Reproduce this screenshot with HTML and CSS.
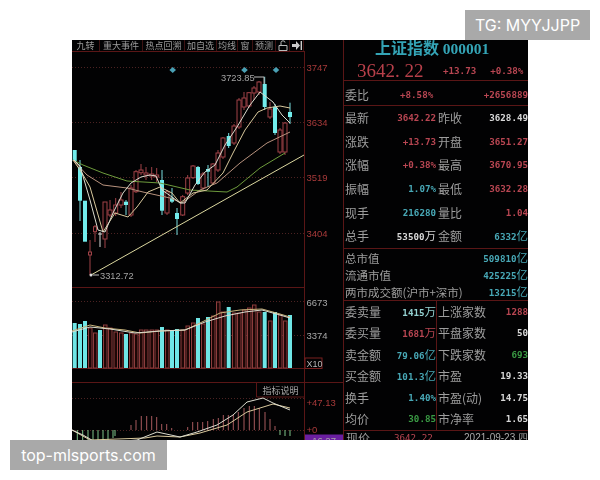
FILE: index.html
```html
<!DOCTYPE html>
<html lang="zh">
<head>
<meta charset="utf-8">
<title>上证指数 000001</title>
<link rel="stylesheet" href="styles.css">
</head>
<body>
<div class="stage">
  <div class="terminal">
    <section class="chart">
      <nav class="toolbar">
        <span>九转</span><span>重大事件</span><span>热点回溯</span><span>加自选</span><span>均线</span><span>窗</span><span>预测</span>
        <span class="tool-icon"><svg width="10" height="11" viewBox="0 0 10 11"><path class="glyph" d="M1 5.500H9V10.500H1ZM3 5.500V2.500Q3 .8 5 .8T7 2.500"/></svg></span>
        <span class="tool-icon"><svg width="10" height="9" viewBox="0 0 10 9"><path class="glyph-solid" d="M0 3H4V0L8 4.500 4 9V6H0ZM8.600 0H10V9H8.600Z"/></svg></span>
      </nav>
      <svg class="plot" width="271" height="388" viewBox="72 52 271 388">
        <path class="rule" d="M304.500 52V440M72 287.500H304.500M72 368.500H304.500M72 382.500H343M256.500 382.500V397M256.500 397H304.500"/>
        <path class="dots" d="M72 67.500H304M72 122.500H304M72 177.500H304M72 233.500H304M72 301.500H304M72 335.500H304M72 398.500H304M72 430.500H304"/>

        <g class="diamonds">
          <path d="M172.700 67 176 70 172.700 73 169.400 70Z"/>
          <path d="M244.500 67 247.800 70 244.500 73 241.200 70Z"/>
          <path d="M276 67 279.300 70 276 73 272.700 70Z"/>
        </g>

        <g class="wick-r">
          <path d="M90 240V275M95 225V242M105 202V248M110 200V217M115.700 198V216M121 192V208M131 185V217M136 170V193M141 164V175M146 167V180M151.700 167V180M156.700 168V182M167 190V215M182.700 195V216M187.700 175V195M193 165V179M203 172V190M213 163V185M218 150V172M223 137V159M234 124V145M239 98V129M244 92V110M249 92V108M254 86V100M259 81V95M270 102V119M280 128V154M285 122V155"/>
        </g>
        <g class="wick-c">
          <path d="M80 160V221M126 200V215M162 170V215M172 188V203M177 208V235M198 166V185M208 165V187M228.700 133V148M264.700 76.700V110M275 104V135M290 102.700V124"/>
        </g>
        <path class="wick-w" d="M100 232V247M98 234H102"/>
        <g class="body-r">
          <rect x="88.500" y="252" width="3" height="3"/><rect x="93.500" y="226.700" width="3" height="5"/>
          <rect x="103" y="202" width="4" height="37"/><rect x="108" y="210" width="4" height="5"/>
          <rect x="113.700" y="205" width="4" height="8"/><rect x="119" y="200" width="4" height="5"/>
          <rect x="129" y="188" width="4" height="27"/><rect x="134" y="171.700" width="4" height="20"/>
          <rect x="139" y="170" width="4" height="2.700"/><rect x="144" y="173" width="4" height="2"/>
          <rect x="149.700" y="174" width="4" height="2"/><rect x="154.700" y="175" width="4" height="2"/>
          <rect x="165" y="191.700" width="4" height="21.300"/><rect x="180.700" y="196.700" width="4" height="18.300"/>
          <rect x="185.700" y="178" width="4" height="15"/><rect x="191" y="166" width="4" height="11.700"/>
          <rect x="201" y="174" width="4" height="14"/><rect x="211" y="164" width="4" height="19"/>
          <rect x="216" y="153" width="4" height="17"/><rect x="221" y="138" width="4" height="19"/>
          <rect x="232" y="126" width="4" height="17"/><rect x="237" y="100" width="4" height="27"/>
          <rect x="242" y="98" width="4" height="9"/><rect x="247" y="92.700" width="4" height="13.300"/>
          <rect x="252" y="88" width="4" height="5"/><rect x="257" y="82" width="4" height="10"/>
          <rect x="268" y="109" width="4" height="8"/><rect x="278" y="130" width="4" height="22"/>
          <rect x="283" y="123" width="4" height="29"/>
        </g>
        <g class="body-c">
          <rect x="72.700" y="150" width="4" height="11"/><rect x="78" y="167" width="4" height="33.700"/>
          <rect x="83" y="200.700" width="4" height="41"/><rect x="124" y="201.700" width="4" height="3.300"/>
          <rect x="160" y="180" width="4" height="30.700"/><rect x="170" y="197.700" width="4" height="4"/>
          <rect x="175" y="213" width="4" height="6"/><rect x="196" y="167" width="4" height="17"/>
          <rect x="206" y="169" width="4" height="2.700"/><rect x="226.700" y="136" width="4" height="10"/>
          <rect x="262.700" y="84" width="4" height="23"/><rect x="273" y="106.700" width="4" height="26.300"/>
          <rect x="288" y="112" width="4" height="5"/>
        </g>

        <polyline class="ma ma-green" points="73,160 83,165 103,173 127,181 160,183 190,190 227,192 237,187 260,168 285,153"/>
        <polyline class="ma ma-pink" points="73,160 87,175 103,185 127,188 143,192 170,198 182,203 200,190 217,183 240,163 267,143 290,132"/>
        <polyline class="ma ma-beige" points="73,160 82,173 90,187 103,232 115,213 128,217 137,207 148,192 160,187 172,193 180,203 193,193 207,190 223,173 233,153 245,130 258,112 267,108 280,106 290,108"/>
        <polyline class="ma ma-white" points="74,160 80,166 90,200 98,230 105,232 113,213 123,193 131,183 141,177 150,175 156,176 162,190 172,197 180,203 185,203 195,185 205,172 215,165 225,145 237,127 250,105 260,92 273,102 282,115 290,123"/>
        <path class="trend" d="M91 275 304 155"/>

        <circle class="pin" cx="91" cy="275" r="1.500"/>
        <path class="leader" d="M93 275H99M254 77H264V84"/>
        <text class="price-note" x="221" y="80.500">3723.85</text>
        <text class="price-note" x="100" y="278.500">3312.72</text>
        <text class="axis axis-red" x="306.500" y="70.500">3747</text>
        <text class="axis axis-red" x="306.500" y="126">3634</text>
        <text class="axis axis-red" x="306.500" y="181">3519</text>
        <text class="axis axis-red" x="306.500" y="236.500">3404</text>
        <text class="axis axis-grey" x="306.500" y="306">6673</text>
        <text class="axis axis-grey" x="306.500" y="339">3374</text>

        <g class="vol-r">
          <rect x="88.500" y="328" width="3.500" height="40"/><rect x="93.500" y="333" width="3.500" height="35"/>
          <rect x="103.500" y="325" width="3.500" height="43"/><rect x="108.500" y="328" width="3.500" height="40"/>
          <rect x="114" y="332" width="3.500" height="36"/><rect x="119.500" y="333" width="3.500" height="35"/>
          <rect x="129.500" y="333" width="3.500" height="35"/><rect x="134.500" y="334" width="3.500" height="34"/>
          <rect x="139.500" y="330" width="3.500" height="38"/><rect x="144.500" y="330" width="3.500" height="38"/>
          <rect x="150" y="330" width="3.500" height="38"/><rect x="155" y="330" width="3.500" height="38"/>
          <rect x="165.500" y="330" width="3.500" height="38"/><rect x="181" y="330" width="3.500" height="38"/>
          <rect x="186" y="326" width="3.500" height="42"/><rect x="191.500" y="323" width="3.500" height="45"/>
          <rect x="201.500" y="324" width="3.500" height="44"/><rect x="211.500" y="316" width="3.500" height="52"/>
          <rect x="216.500" y="302" width="3.500" height="66"/><rect x="221.500" y="312" width="3.500" height="56"/>
          <rect x="232.500" y="313" width="3.500" height="55"/><rect x="237.500" y="313" width="3.500" height="55"/>
          <rect x="242.500" y="310" width="3.500" height="58"/><rect x="247.500" y="308" width="3.500" height="60"/>
          <rect x="252.500" y="305" width="3.500" height="63"/><rect x="257.500" y="312" width="3.500" height="56"/>
          <rect x="268.500" y="321" width="3.500" height="47"/><rect x="278.500" y="315" width="3.500" height="53"/>
          <rect x="283.500" y="321" width="3.500" height="47"/>
        </g>
        <g class="vol-c">
          <rect x="72.700" y="323" width="4" height="45"/><rect x="78" y="324" width="4" height="44"/>
          <rect x="83" y="321" width="4" height="47"/><rect x="98" y="330" width="4" height="38"/>
          <rect x="124" y="334" width="4" height="34"/><rect x="160" y="327" width="4" height="41"/>
          <rect x="170" y="330" width="4" height="38"/><rect x="175" y="329" width="4" height="39"/>
          <rect x="196" y="318" width="4" height="50"/><rect x="206" y="317" width="4" height="51"/>
          <rect x="226.700" y="307" width="4" height="61"/><rect x="262.700" y="312" width="4" height="56"/>
          <rect x="273" y="312" width="4" height="56"/><rect x="288" y="315" width="4" height="53"/>
        </g>
        <polyline class="ma ma-beige-vol" points="72,331 90,325 105,328 125,330 140,333 160,331 185,330 200,323 220,313 240,310 262,309 280,314 290,317"/>
        <polyline class="ma ma-white-vol" points="72,332 90,327 110,329 135,333 160,331 185,330 205,322 225,316 245,312 262,310 280,315 290,318"/>
        <rect class="x-box" x="305" y="358" width="17" height="10.500"/>
        <text class="axis axis-x" x="306.500" y="366.500">X10</text>

        <text class="legend" x="262.500" y="394">指标说明</text>
        <path class="macd-r" d="M131 425V430M136 420V430M141.300 416V430M146.700 416V430M151.700 416V430M156.700 417V430M161.700 424V430M166.700 424V430M171.700 428V430M187.700 427V430M192.700 422V430M197.700 422V430M202.700 422V430M207.700 421V430M213.300 419V430M218.300 418V430M223.300 415V430M228.300 415V430M233.300 415V430M238.300 412V430M244 408V430M249.300 406V430M254.300 406V430M259.300 408V430M265 412V430M270 419V430M275 426V430"/>
        <path class="macd-g" d="M77.300 430V440M82.700 430V440M88 430V440M93 430V440M98 430V440M103 430V440M108 430V440M113 430V438M115 430V436M280 430V435M285 430V436M290 430V436"/>
        <polyline class="ma ma-beige" points="72,430 90,440 145,438 157,436 180,437 200,433 227,425 247,412 273,404 290,408"/>
        <polyline class="ma ma-white" points="72,430 83,435 97,443 137,440 157,432 180,437 197,432 217,425 233,415 247,402 263,398 273,403 290,410"/>
        <text class="axis axis-red" x="306.500" y="406">+47.13</text>
        <text class="axis axis-red" x="306.500" y="433">+0</text>
        <rect class="purple" x="305" y="434.500" width="38" height="8"/>
        <text class="axis axis-grey" x="309" y="444">-16.27</text>
      </svg>
    </section>

    <section class="quote">
      <h1 class="title">上证指数 <b>000001</b></h1>
      <div class="headline">
        <span class="big">3642. 22</span>
        <span class="num red">+13.73</span>
        <span class="num red">+0.38%</span>
      </div>
      <div class="ratio">
        <span class="lab">委比</span>
        <span class="num red">+8.58%</span>
        <span class="num red">+2656889</span>
      </div>
      <div class="table">
        <div class="row"><span class="lab">最新</span><span class="num red">3642.22</span><span class="lab">昨收</span><span class="num white">3628.49</span></div>
        <div class="row"><span class="lab">涨跌</span><span class="num red">+13.73</span><span class="lab">开盘</span><span class="num red">3651.27</span></div>
        <div class="row"><span class="lab">涨幅</span><span class="num red">+0.38%</span><span class="lab">最高</span><span class="num red">3670.95</span></div>
        <div class="row"><span class="lab">振幅</span><span class="num cyan">1.07%</span><span class="lab">最低</span><span class="num red">3632.28</span></div>
        <div class="row"><span class="lab">现手</span><span class="num cyan">216280</span><span class="lab">量比</span><span class="num red">1.04</span></div>
        <div class="row"><span class="lab">总手</span><span class="num white">53500<i>万</i></span><span class="lab">金额</span><span class="num cyan">6332<i>亿</i></span></div>
      </div>
      <div class="market">
        <div class="mrow"><span class="lab">总市值</span><span class="num cyan">509810<i>亿</i></span></div>
        <div class="mrow"><span class="lab">流通市值</span><span class="num cyan">425225<i>亿</i></span></div>
        <div class="mrow"><span class="lab">两市成交额(沪市+深市)</span><span class="num cyan">13215<i>亿</i></span></div>
      </div>
      <div class="table lower">
        <div class="row"><span class="lab">委卖量</span><span class="num pale">1415<i>万</i></span><span class="lab">上涨家数</span><span class="num red">1288</span></div>
        <div class="row"><span class="lab">委买量</span><span class="num red">1681<i>万</i></span><span class="lab">平盘家数</span><span class="num white">50</span></div>
        <div class="row"><span class="lab">卖金额</span><span class="num cyan">79.06<i>亿</i></span><span class="lab">下跌家数</span><span class="num green">693</span></div>
        <div class="row"><span class="lab">买金额</span><span class="num cyan">101.3<i>亿</i></span><span class="lab">市盈</span><span class="num white">19.33</span></div>
        <div class="row"><span class="lab">换手</span><span class="num cyan">1.40%</span><span class="lab">市盈(动)</span><span class="num white">14.75</span></div>
        <div class="row"><span class="lab">均价</span><span class="num green">30.85</span><span class="lab">市净率</span><span class="num white">1.65</span></div>
      </div>
      <div class="footer">
        <span class="lab">现价</span>
        <span class="num red">3642.22</span>
        <span class="foot-date">2021-09-23 四</span>
      </div>
    </section>
  </div>
  <div class="badge badge-top">TG: MYYJJPP</div>
  <div class="badge badge-bottom">top-mlsports.com</div>
</div>
</body>
</html>
```

FILE: styles.css
```css
* { box-sizing: border-box; }
html, body { margin: 0; background: #fff; }
.stage { position: relative; width: 600px; height: 480px; padding: 40px 72px; overflow: hidden; }

.terminal {
  display: flex; width: 456px; height: 400px; background: #020203; overflow: hidden;
  filter: blur(0.45px);
}

/* left chart */
.chart { display: flex; flex-direction: column; width: 271px; flex: none; }
.toolbar {
  display: grid; grid-template-columns: 28px 43px 42px 32px 21px 15px 23px 14px 14px;
  height: 12px; width: 232.500px; border-bottom: 1px solid #5a1616; flex: none;
  font: 9px/11px "Noto Sans CJK SC", sans-serif; color: #9c9c9c; text-align: center;
}
.toolbar span { border-right: 1px solid #3c1212; white-space: nowrap; overflow: hidden; }
.toolbar .tool-icon { display: flex; align-items: center; justify-content: center; }
.glyph { fill: none; stroke: #bbb; stroke-width: 1; }
.glyph-solid { fill: #ccc; }
.plot { display: block; flex: none; }

.rule { fill: none; stroke: #5a1616; stroke-width: 1; }
.dots { fill: none; stroke: #4c2222; stroke-width: 1; stroke-dasharray: 1 2; }
.diamonds path { fill: #4aa0b4; }
.wick-r { stroke: #a04248; stroke-width: 1; fill: none; }
.wick-c { stroke: #79dde0; stroke-width: 1; fill: none; }
.wick-w { stroke: #d8d8d8; stroke-width: 1; fill: none; }
.body-r rect { fill: #080203; stroke: #a04248; stroke-width: 1; }
.body-c rect { fill: #72ecec; }
.ma { fill: none; stroke-width: 1; stroke-linejoin: round; }
.ma-white { stroke: #dcdccf; }
.ma-beige { stroke: #d8c89c; }
.ma-pink { stroke: #b8927e; }
.ma-green { stroke: #6d9a3c; }
.ma-beige-vol { stroke: #c8b47c; }
.ma-white-vol { stroke: #dcdccf; }
.trend { fill: none; stroke: #dcd8a0; stroke-width: 1; }
.pin { fill: #ddd; }
.leader { fill: none; stroke: #bdbdbd; stroke-width: 1; }
.price-note { font: 9.300px "Liberation Sans", sans-serif; fill: #a4a4a4; }
.axis { font: 9.500px "Liberation Sans", sans-serif; }
.axis-red { fill: #a83a3a; }
.axis-grey { fill: #a8a8a8; }
.axis-x { fill: #b5b5b5; font-size: 9px; }
.vol-r rect { fill: #1c0706; stroke: #8c3c3c; stroke-width: 1; }
.vol-c rect { fill: #6fe6e6; }
.x-box { fill: none; stroke: #7a2020; stroke-width: 1; }
.legend { font: 9px "Noto Sans CJK SC", sans-serif; fill: #a8a8a8; }
.macd-r { fill: none; stroke: #a85a5e; stroke-width: 1; }
.macd-g { fill: none; stroke: #7fc48a; stroke-width: 1; }
.purple { fill: #6a1fa0; }

/* right quote panel */
.quote { width: 185px; flex: none; border-left: 1px solid #5a1616; display: flex; flex-direction: column; }
.title {
  margin: 0; height: 16px; padding-left: 31px; white-space: nowrap;
  font: 700 16px/14px "Noto Sans CJK SC", sans-serif; color: #34a4b6;
}
.title b { font: 700 15.500px/14px "Liberation Serif", serif; }
.headline { display: flex; align-items: center; height: 25px; padding: 6px 0 0 13px; flex: none; border-bottom: 1px solid #5a1616; }
.big { font: 19px/20px "Liberation Serif", serif; color: #b8404a; width: 86px; white-space: nowrap; }
.headline .num:last-child { margin-left: 14px; }
.ratio { display: flex; align-items: center; height: 25px; padding: 3px 0 0 1px; flex: none; border-bottom: 1px solid #5a1616; }
.ratio .lab { width: 55px; }
.ratio .num:last-child { margin-left: auto; }
.lab { font: 12px/14px "Noto Sans CJK SC", sans-serif; color: #9e9e9e; white-space: nowrap; }
.num { font: 700 9.200px/14px "DejaVu Sans Mono", monospace; white-space: nowrap; }
.num i { font: 400 11.500px/14px "Noto Sans CJK SC", sans-serif; }
.red { color: #b84652; }
.cyan { color: #48a8b6; }
.pale { color: #94d2d2; }
.white { color: #d8d8d8; }
.green { color: #3a9a44; }

.table { display: flex; flex-direction: column; flex: none; height: 143px; border-bottom: 1px solid #5a1616; }
.table .row {
  display: grid; grid-template-columns: 24px 67px 40px 1fr; align-items: center; flex: 1;
  padding-left: 1px;
}
.table .row .num { text-align: right; }
.table .row .lab:nth-child(3) { padding-left: 2px; }
.market { height: 52px; flex: none; padding-top: 1px; display: flex; flex-direction: column; border-bottom: 1px solid #5a1616; }
.mrow { display: flex; justify-content: space-between; align-items: center; height: 17px; padding-left: 1px; }
.mrow .lab { font-size: 11.500px; }
.lower { height: 130px; position: relative; }
.lower::after { content: ""; position: absolute; left: 92px; top: 0; bottom: 0; width: 1px; background: #5a1616; }
.footer { display: flex; align-items: center; height: 13px; padding-left: 2px; flex: none; overflow: hidden; }
.footer .num { margin-left: 24px; font-weight: 400; }
.foot-date { margin-left: auto; font: 10px/14px "Liberation Sans", sans-serif; color: #aaa; white-space: nowrap; }

/* overlays */
.badge { position: absolute; height: 30px; background: #a9a9a9; color: #fff; font: 400 16px/30px "Inter", sans-serif; text-align: center; white-space: nowrap; }
.badge-top { right: 10px; top: 10px; width: 125px; }
.badge-bottom { left: 10px; top: 440px; width: 157px; }
```
